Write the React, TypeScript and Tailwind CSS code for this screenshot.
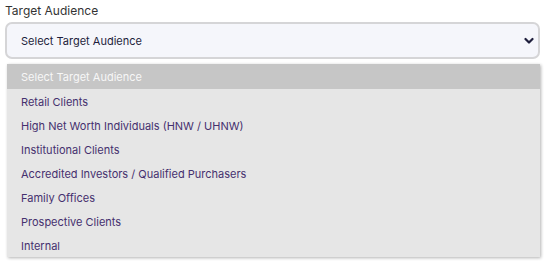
const OPTIONS = [
  "Retail Clients",
  "High Net Worth Individuals (HNW / UHNW)",
  "Institutional Clients",
  "Accredited Investors / Qualified Purchasers",
  "Family Offices",
  "Prospective Clients",
  "Internal",
];

export default function App() {
  return (
    <div className="min-h-screen bg-white px-[5px] pt-[3px]" style={{ fontFamily: "Inter, 'Liberation Sans', sans-serif" }}>
      <label className="block text-[12px] leading-[16px] text-[#333]">Target Audience</label>
      <div className="mt-[3px] w-[535px]">
        <div className="flex h-[37px] items-center justify-between rounded-[7px] border-2 border-[#d5d5d7] bg-[#f5f6fb] pl-[14px] pr-[4px]">
          <span className="pt-[2px] text-[11px] text-[#1e1e3c]">Select Target Audience</span>
          <svg width="10" height="8" viewBox="0 0 10 8" className="mt-[1px]">
            <path d="M1.5 2 L5 5.5 L8.5 2" fill="none" stroke="#1e1e3c" strokeWidth="2.2" strokeLinecap="round" strokeLinejoin="round" />
          </svg>
        </div>
        <ul className="ml-[2px] mt-[5px] w-[533px] bg-[#e6e6e6] text-[11px] shadow-[1px_1px_3px_rgba(0,0,0,0.3)]">
          <li className="flex h-[25px] items-center bg-[#c6c6c6] pl-[14px] pt-[1px] text-[#f7f7f7]">Select Target Audience</li>
          {OPTIONS.map((o) => (
            <li key={o} className="flex h-[24px] items-center pl-[14px] pt-[2px] text-[#45306e]">
              {o}
            </li>
          ))}
        </ul>
      </div>
    </div>
  );
}
